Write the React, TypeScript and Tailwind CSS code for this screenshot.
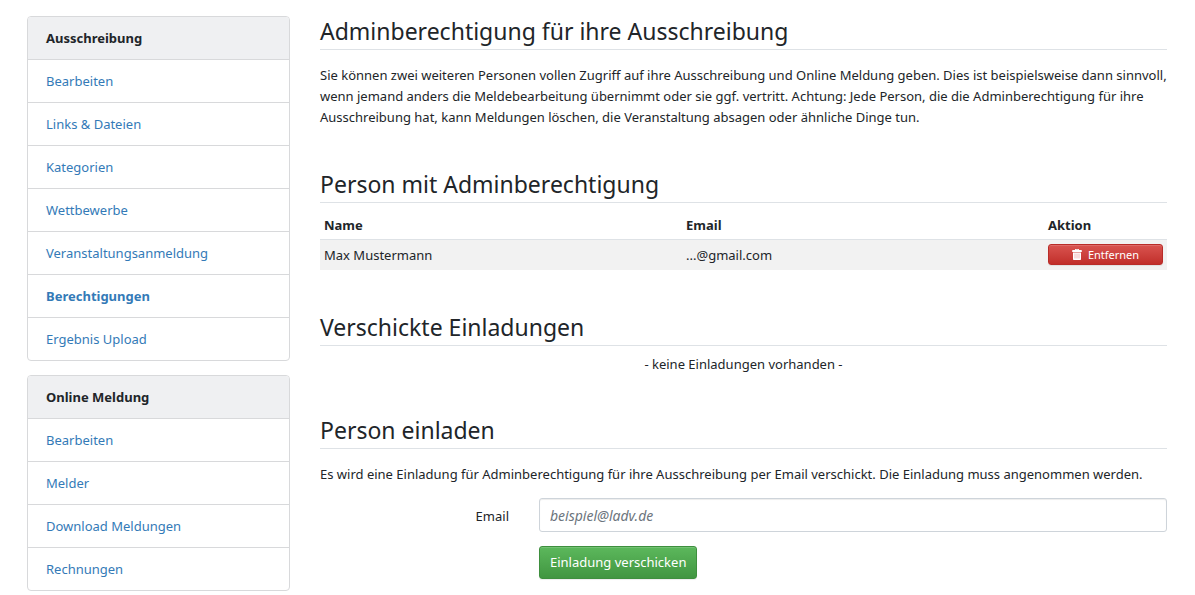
import React from "react";

type MenuItem = { label: string; active?: boolean };

const tender: MenuItem[] = [
  { label: "Bearbeiten" },
  { label: "Links & Dateien" },
  { label: "Kategorien" },
  { label: "Wettbewerbe" },
  { label: "Veranstaltungsanmeldung" },
  { label: "Berechtigungen", active: true },
  { label: "Ergebnis Upload" },
];

const online: MenuItem[] = [
  { label: "Bearbeiten" },
  { label: "Melder" },
  { label: "Download Meldungen" },
  { label: "Rechnungen" },
];

function Menu({ title, items }: { title: string; items: MenuItem[] }) {
  return (
    <nav aria-label={title} className="overflow-hidden rounded border border-[#d8d9db]">
      <h2 className="bg-[#eff0f2] px-[18px] py-[11px] font-bold leading-5">{title}</h2>
      <ul>
        {items.map((item) => (
          <li key={item.label} className="border-t border-[#d8d9db]">
            <a
              href="#"
              className={`block px-[18px] py-[11px] leading-5 text-[#337ab7] ${item.active ? "font-bold" : ""}`}
            >
              {item.label}
            </a>
          </li>
        ))}
      </ul>
    </nav>
  );
}

function Heading({ children }: { children: React.ReactNode }) {
  return (
    <h2 className="border-b border-[#dee2e6] pb-[3px] text-[23px] leading-[30px]">{children}</h2>
  );
}

export default function App() {
  return (
    <div className="flex gap-[30px] bg-white pt-4 pr-7 pl-[27px] font-['Noto_Sans','Open_Sans',sans-serif] text-[13px] text-[#212529]">
      <aside className="flex w-[263px] shrink-0 flex-col gap-[14px]">
        <Menu title="Ausschreibung" items={tender} />
        <Menu title="Online Meldung" items={online} />
      </aside>
      <main className="flex min-w-0 grow flex-col">
        <section>
          <Heading>Adminberechtigung für ihre Ausschreibung</Heading>
          <p className="pt-[15px] leading-[21px]">
            Sie können zwei weiteren Personen vollen Zugriff auf ihre Ausschreibung und Online Meldung geben. Dies ist
            beispielsweise dann sinnvoll, wenn jemand anders die Meldebearbeitung übernimmt oder sie ggf. vertritt.
            Achtung: Jede Person, die die Adminberechtigung für ihre Ausschreibung hat, kann Meldungen löschen, die
            Veranstaltung absagen oder ähnliche Dinge tun.
          </p>
        </section>
        <section className="pt-[41px]">
          <Heading>Person mit Adminberechtigung</Heading>
          <table className="mt-2 w-full table-fixed border-separate border-spacing-0 text-left">
            <thead>
              <tr className="leading-5">
                <th className="border-b border-[#dee2e6] p-1 font-bold">Name</th>
                <th className="border-b border-[#dee2e6] p-1 font-bold">Email</th>
                <th className="w-[123px] border-b border-[#dee2e6] p-1 font-bold">Aktion</th>
              </tr>
            </thead>
            <tbody>
              <tr className="bg-[#f2f2f2] leading-[22px]">
                <td className="p-1">Max Mustermann</td>
                <td className="p-1">...@gmail.com</td>
                <td className="p-1 align-top">
                  <button
                    type="button"
                    className="flex h-[21px] w-full items-center justify-center gap-[6px] rounded-[3px] border border-[#b92c28] bg-linear-to-b from-[#d9534f] to-[#c12e2a] text-[11px] text-white shadow-[inset_0_1px_0_rgba(255,255,255,0.15),0_1px_1px_rgba(0,0,0,0.075)]"
                  >
                    <svg viewBox="0 0 10 11" className="h-[11px] w-[10px]" aria-hidden="true">
                      <path
                        fill="white"
                        d="M3 1V.5Q3 0 3.5 0h3Q7 0 7 .5V1h2.3q.5 0 .5.5V3H.2V1.5Q.2 1 .7 1zM4 1h2V.7H4zM1 3.5h8v6.8q0 .7-.7.7H1.7Q1 11 1 10.3z"
                      />
                      <path stroke="#d9534f" strokeOpacity="0.5" strokeWidth="0.8" d="M3 4.5v5M5 4.5v5M7 4.5v5" />
                    </svg>
                    Entfernen
                  </button>
                </td>
              </tr>
            </tbody>
          </table>
        </section>
        <section className="pt-[42px]">
          <Heading>Verschickte Einladungen</Heading>
          <p className="pt-2 text-center leading-[21px]">- keine Einladungen vorhanden -</p>
        </section>
        <section className="pt-10">
          <Heading>Person einladen</Heading>
          <p className="pt-[15px] leading-[21px]">
            Es wird eine Einladung für Adminberechtigung für ihre Ausschreibung per Email verschickt. Die Einladung muss
            angenommen werden.
          </p>
          <form className="grid grid-cols-[189px_1fr] gap-x-[30px] gap-y-[14px] pt-[13px]">
            <label htmlFor="email" className="self-center pt-[3px] text-right">
              Email
            </label>
            <input
              id="email"
              type="email"
              placeholder="beispiel@ladv.de"
              className="h-[34px] w-full rounded-[3px] border border-[#ced4da] px-[10px] pt-px text-sm shadow-[inset_0_1px_1px_rgba(0,0,0,0.075)] placeholder:text-[#6c757d] placeholder:italic"
            />
            <button
              type="button"
              className="col-start-2 h-[33px] justify-self-start rounded-[3px] border border-[#3e8f3e] bg-linear-to-b from-[#5cb85c] to-[#419641] px-[10px] pt-px text-white shadow-[inset_0_1px_0_rgba(255,255,255,0.15),0_1px_1px_rgba(0,0,0,0.075)]"
            >
              Einladung verschicken
            </button>
          </form>
        </section>
      </main>
    </div>
  );
}
